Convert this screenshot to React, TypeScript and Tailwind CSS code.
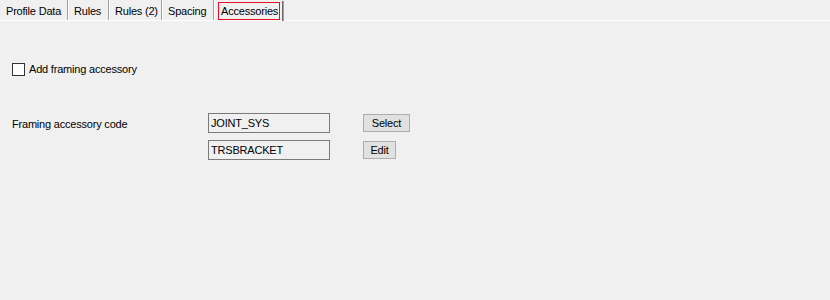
export default function App() {
  const tabs = [
    { label: "Profile Data", w: "w-[68px]" },
    { label: "Rules", w: "w-[41px]" },
    { label: "Rules (2)", w: "w-[53px]" },
    { label: "Spacing", w: "w-[52px]" },
  ];

  return (
    <div className="w-[830px] h-[300px] bg-[#f0f0f0] text-[11px] tracking-[-0.2px] text-black font-['Liberation_Sans',Arial,sans-serif] leading-none overflow-hidden whitespace-nowrap">
      {/* tab strip */}
      <div className="flex h-[21px] border-b border-white">
        {tabs.map((t) => (
          <div
            key={t.label}
            className={`${t.w} h-[20px] flex items-center pl-[6px] pt-[2px] border-r border-[#a0a0a0] shadow-[1px_0_0_#ffffff]`}
          >
            {t.label}
          </div>
        ))}
        <div className="w-[68px] h-[20px] flex items-end pl-[4px]">
          <div className="h-[18px] w-[62px] border border-[#e81123] flex items-center pl-[2px]">
            Accessories
          </div>
        </div>
        <div className="h-[20px] w-[2px] mt-[1px] bg-[#696969] border-r border-[#a0a0a0]" />
      </div>

      {/* body */}
      <div className="pl-[12px]">
        <label className="flex items-center gap-[4px] mt-[41px] h-[14px]">
          <span className="w-[13px] h-[13px] border border-[#333333] bg-white" />
          <span>Add framing accessory</span>
        </label>

        <div className="flex mt-[37px]">
          <div className="w-[196px] pt-[6px]">Framing accessory code</div>
          <div className="flex flex-col gap-[7px]">
            <div className="flex items-center">
              <div className="w-[122px] h-[20px] border border-[#7a7a7a] bg-[#f0f0f0] flex items-center pl-[2px]">
                JOINT_SYS
              </div>
              <button className="ml-[33px] w-[47px] h-[18px] border border-[#adadad] bg-[#e1e1e1] flex items-center justify-center">
                Select
              </button>
            </div>
            <div className="flex items-center">
              <div className="w-[122px] h-[20px] border border-[#7a7a7a] bg-[#f0f0f0] flex items-center pl-[2px]">
                TRSBRACKET
              </div>
              <button className="ml-[33px] w-[33px] h-[18px] border border-[#adadad] bg-[#e1e1e1] flex items-center justify-center">
                Edit
              </button>
            </div>
          </div>
        </div>
      </div>
    </div>
  );
}
